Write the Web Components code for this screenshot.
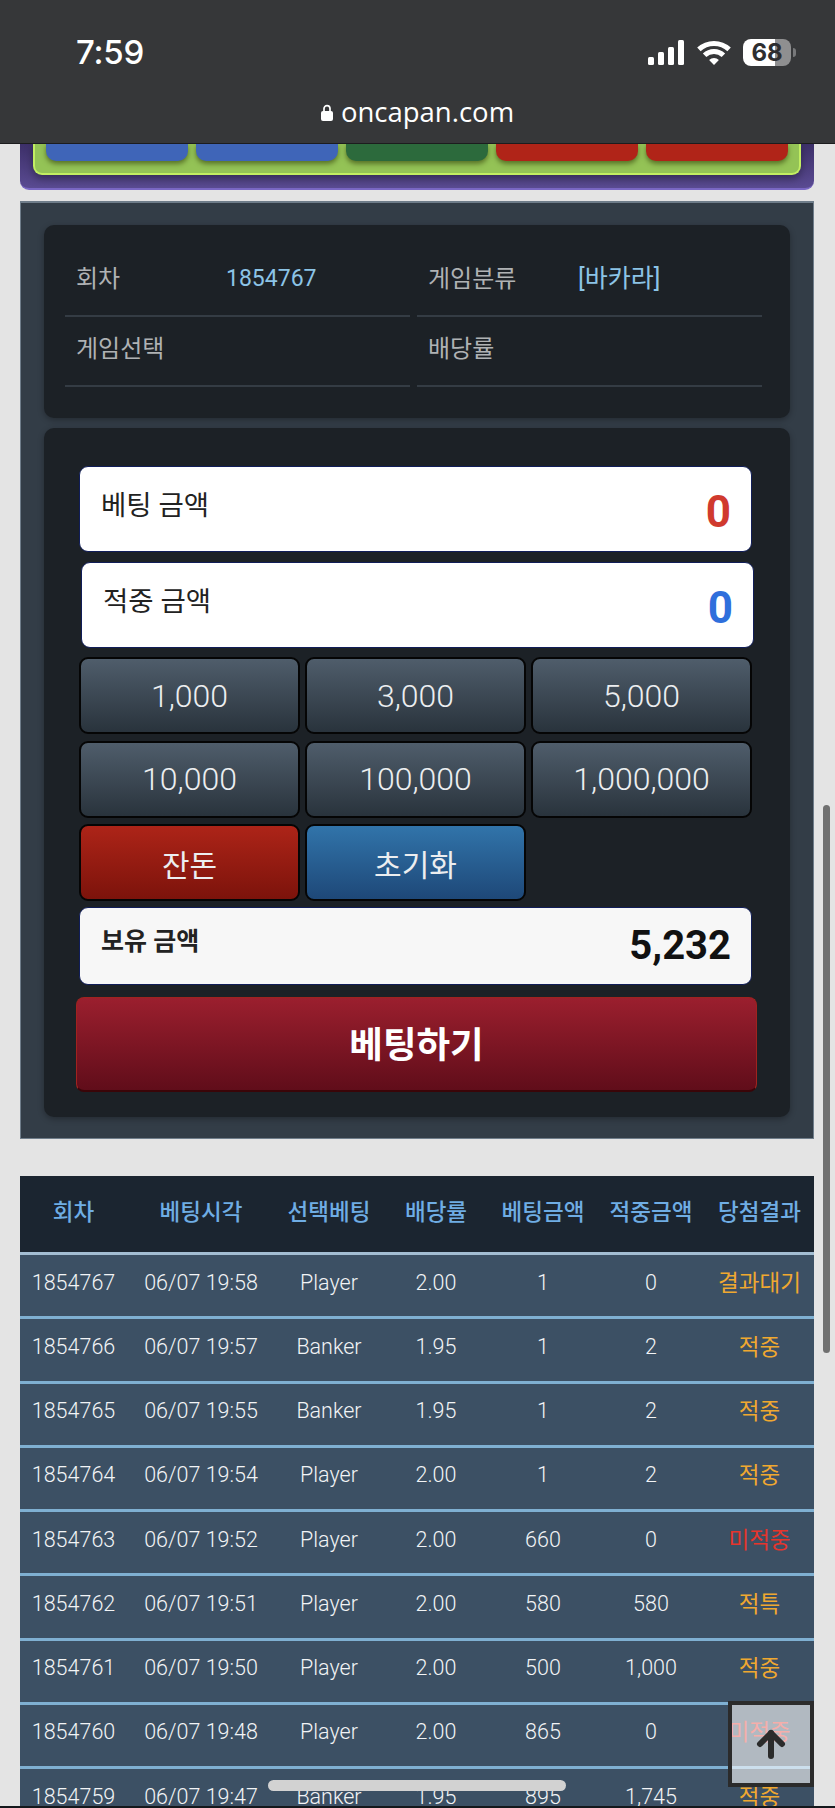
<!doctype html>
<html lang="ko">
<head>
<meta charset="utf-8">
<title>oncapan.com</title>
<style>
  html, body { margin: 0; height: 1808px; overflow: hidden; background: #e4e4e4; }
  body { font-family: Roboto, "Noto Sans CJK KR", sans-serif; font-weight: 300; }
</style>
</head>
<body>

<browser-bar time="7:59" url="oncapan.com" battery="68"></browser-bar>
<game-board></game-board>

<bet-panel>
  <info-card>
    <info-cell label="회차" value="1854767"></info-cell>
    <info-cell label="게임분류" value="[바카라]" wide></info-cell>
    <info-cell label="게임선택"></info-cell>
    <info-cell label="배당률"></info-cell>
  </info-card>
  <bet-card>
    <amount-box label="베팅 금액" value="0" tone="red"></amount-box>
    <amount-box label="적중 금액" value="0" tone="blue" shifted></amount-box>
    <chip-grid>
      <chip-button>1,000</chip-button>
      <chip-button>3,000</chip-button>
      <chip-button>5,000</chip-button>
      <chip-button>10,000</chip-button>
      <chip-button>100,000</chip-button>
      <chip-button>1,000,000</chip-button>
      <chip-button kind="red">잔돈</chip-button>
      <chip-button kind="blue">초기화</chip-button>
    </chip-grid>
    <amount-box label="보유 금액" value="5,232" tone="black" balance></amount-box>
    <submit-button>베팅하기</submit-button>
  </bet-card>
</bet-panel>

<bet-history></bet-history>

<page-overlays></page-overlays>

<script>
'use strict'

// helper, every element here is the same shape: a template string in a shadow root
const define = (name, render) => {
  customElements.define(name, class extends HTMLElement {
    constructor() {
      super()
      this.attachShadow({mode: 'open'})
    }
    connectedCallback() {
      this.shadowRoot.innerHTML = render(this)
    }
  })
}
const attr = (el, name, fallback = '') => el.getAttribute(name) ?? fallback


// browser chrome on top
define('browser-bar', el => `
  <style>
    :host { display: block; height: 143px; background: #363739; border-bottom: 1px solid #1c1c1e; box-sizing: content-box;
            color: #fff; font-family: Inter, sans-serif; margin-bottom: -1px; position: relative; z-index: 2; }
    .status { display: flex; align-items: center; height: 27px; padding: 39px 39px 0 76px; }
    .time { font-size: 33px; font-weight: 500; line-height: 27px; flex: 1; letter-spacing: -.2px; }
    .icons { display: flex; align-items: center; }
    .wifi { margin: 0 11px 0 12px; }
    .battery { position: relative; width: 48px; height: 27px; border-radius: 8px; overflow: hidden;
               background: linear-gradient(90deg, #fff 0 32px, #8f8f90 32px); color: #2e2e30;
               font-size: 24px; font-weight: 700; line-height: 27px; text-align: center; }
    .tip { width: 3px; height: 9px; background: #77787a; border-radius: 0 3px 3px 0; margin-left: 2px; }
    .url { display: flex; align-items: center; justify-content: center; gap: 8px; margin-top: 29px; height: 34px;
           font-family: "Open Sans", sans-serif; font-size: 27.5px; font-weight: 400; line-height: 34px; }
  </style>
  <div class="status">
    <div class="time">${attr(el, 'time')}</div>
    <div class="icons">
      <svg width="36" height="25" viewBox="0 0 36 25" fill="#fff">
        <rect x="0" y="17" width="6" height="8" rx="1.5"/>
        <rect x="10" y="12" width="6" height="13" rx="1.5"/>
        <rect x="20" y="7" width="6" height="18" rx="1.5"/>
        <rect x="30" y="0" width="6" height="25" rx="1.5"/>
      </svg>
      <svg class="wifi" width="36" height="25" viewBox="0 0 36 25" fill="none" stroke="#fff" stroke-width="5">
        <path d="M2.9 9.4A22 22 0 0 1 33.1 9.4"/>
        <path d="M8.6 15.2A13.5 13.5 0 0 1 27.4 15.2"/>
        <path d="M18 25L13.1 20.1A7 7 0 0 1 22.9 20.1Z" fill="#fff" stroke="none"/>
      </svg>
      <div class="battery">${attr(el, 'battery')}</div>
      <div class="tip"></div>
    </div>
  </div>
  <div class="url">
    <svg width="12" height="17" viewBox="0 0 12 17">
      <path d="M3 8V4.6a3 3 0 0 1 6 0V8" fill="none" stroke="#fff" stroke-width="1.7"/>
      <rect x="0" y="7" width="12" height="10" rx="2" fill="#fff"/>
    </svg>
    <span>${attr(el, 'url')}</span>
  </div>
`)


// bottom of the game board, the rest is scrolled away under the bar
define('game-board', () => `
  <style>
    :host { display: block; margin: 0 21px 0 20px; height: 47px; box-sizing: border-box;
            background: linear-gradient(#3c2f68, #5a4b92); border-radius: 0 0 9px 9px;
            border-bottom: 2px solid #7a68c4; }
    .field { margin: 0 13px; height: 32px; box-sizing: border-box; padding: 0 11px; display: flex; gap: 8px;
             background: #94c356; border: 2px solid #c2ee62; border-top: 0; border-radius: 0 0 9px 9px;
             box-shadow: 0 4px 8px rgba(0,0,0,.35); }
    .field i { flex: 1; height: 18px; border-radius: 0 0 10px 10px; box-shadow: 0 3px 5px rgba(40,50,0,.55); }
    .b { background: #3f65b8; } .g { background: #2c6a3c; } .r { background: #b02418; }
  </style>
  <div class="field"><i class="b"></i><i class="b"></i><i class="g"></i><i class="r"></i><i class="r"></i></div>
`)


define('bet-panel', () => `
  <style>
    :host { display: block; margin: 11px 21px 0 20px; padding: 22px 23px 21px; box-sizing: border-box; height: 938px;
            background: #333d47; border: 1px solid #6f7d8a; border-top-width: 2px; }
    .stack { display: flex; flex-direction: column; gap: 10px; }
  </style>
  <div class="stack"><slot></slot></div>
`)

define('info-card', () => `
  <style>
    :host { display: block; height: 193px; box-sizing: border-box; padding: 22px 29px 0 21px; background: #1c2126;
            border-radius: 10px; box-shadow: 0 2px 6px rgba(0,0,0,.3); }
    .grid { display: grid; grid-template-columns: 345px 345px; column-gap: 7px; }
  </style>
  <div class="grid"><slot></slot></div>
`)

define('info-cell', el => `
  <style>
    :host { display: flex; height: 70px; box-sizing: border-box; padding: 10px 0 0 11px; line-height: 44px;
            border-bottom: 2px solid #343c44; }
    .k { width: 150px; color: #afb2b4; font-size: 24px; font-weight: 400; }
    .v { color: #8cc4e6; font-size: 23px; font-weight: 400; }
    :host([wide]) .v { font-size: 25px; }
  </style>
  <div class="k">${attr(el, 'label')}</div><div class="v">${attr(el, 'value')}</div>
`)

define('bet-card', () => `
  <style>
    :host { display: block; height: 689px; box-sizing: border-box; padding: 38px 38px 0 35px; background: #1c2126;
            border-radius: 10px; box-shadow: 0 2px 6px rgba(0,0,0,.3); }
  </style>
  <slot></slot>
`)

const tones = { red: '#d03a2e', blue: '#2f6fdc', black: '#111' }

define('amount-box', el => {
  const balance = el.hasAttribute('balance')
  return `
  <style>
    :host { display: flex; justify-content: space-between; box-sizing: border-box; color: #222;
            height: ${balance ? 78 : 86}px; margin-bottom: ${balance ? 12 : 10}px;
            background: ${balance ? '#f7f7f7' : '#fff'}; border: 1px solid #101d58; border-radius: 9px;
            padding: 0 20px 0 21px; }
    :host([shifted]) { transform: translateX(2px); margin-bottom: 9px; }
    .k { font-size: ${balance ? 25 : 27.5}px; font-weight: ${balance ? 700 : 400}; line-height: ${balance ? 68 : 78}px; }
    .v { font-size: ${balance ? 40 : 44}px; font-weight: 700; line-height: ${balance ? 76 : 90}px;
         color: ${tones[attr(el, 'tone', 'black')]}; font-family: Roboto, sans-serif; }
  </style>
  <div class="k">${attr(el, 'label')}</div><div class="v">${attr(el, 'value')}</div>
`})

define('chip-grid', () => `
  <style>
    :host { display: block; margin: 0 0 6px; }
    .grid { display: grid; grid-template-columns: repeat(3, 221px); grid-auto-rows: 77px; column-gap: 5px; row-gap: 6.5px; }
  </style>
  <div class="grid"><slot></slot></div>
`)

const chipColors = {
  grey: ['#4f5d6b', '#29333c'],
  red: ['#ad2418', '#7c130b'],
  blue: ['#3174aa', '#1e4878']
}

define('chip-button', el => {
  const kind = attr(el, 'kind', 'grey')
  const [from, to] = chipColors[kind]
  return `
  <style>
    :host { display: flex; align-items: center; justify-content: center; box-sizing: border-box;
            background: linear-gradient(${from}, ${to}); border: 2px solid #050505; border-radius: 9px;
            color: #eceef0; font-size: ${kind === 'grey' ? 32 : 30}px; font-weight: ${kind === 'grey' ? 300 : 400}; }
  </style>
  <slot></slot>
`})

define('submit-button', () => `
  <style>
    :host { display: flex; align-items: center; justify-content: center; box-sizing: border-box; height: 95px;
            margin: 0 -5px 0 -3px; background: linear-gradient(#9b1f2e, #600d1a); border: 1px solid #a0231f; border-bottom: 2px solid #3a0508;
            border-radius: 8px; color: #fff; font-size: 36.5px; font-weight: 700; padding-bottom: 3px; }
  </style>
  <slot></slot>
`)


// history table
const COLS = '107px 148px 108px 106px 108px 108px 109px'
const HEAD = ['회차', '베팅시각', '선택베팅', '배당률', '베팅금액', '적중금액', '당첨결과']
const ROWS = [
  ['1854767', '06/07 19:58', 'Player', '2.00', '1', '0', '결과대기'],
  ['1854766', '06/07 19:57', 'Banker', '1.95', '1', '2', '적중'],
  ['1854765', '06/07 19:55', 'Banker', '1.95', '1', '2', '적중'],
  ['1854764', '06/07 19:54', 'Player', '2.00', '1', '2', '적중'],
  ['1854763', '06/07 19:52', 'Player', '2.00', '660', '0', '미적중'],
  ['1854762', '06/07 19:51', 'Player', '2.00', '580', '580', '적특'],
  ['1854761', '06/07 19:50', 'Player', '2.00', '500', '1,000', '적중'],
  ['1854760', '06/07 19:48', 'Player', '2.00', '865', '0', '미적중'],
  ['1854759', '06/07 19:47', 'Banker', '1.95', '895', '1,745', '적중']
]

define('bet-history', () => `
  <style>
    :host { display: block; margin: 37px 21px 0 20px; background: #3c5064; color: #f2f4f6; font-size: 21.5px; }
    .row { display: grid; grid-template-columns: ${COLS}; align-items: center; text-align: center; box-sizing: border-box;
           height: 64.25px; border-bottom: 3px solid #7fb0d2; padding-bottom: 7px; }
    .head { height: 79px; background: #1b2530; border-bottom-color: #a3bdd2; color: #6fade4; font-size: 22.5px; font-weight: 500; padding-bottom: 8px; }
    .win { color: #f0a830; font-size: 22.5px; font-weight: 400; margin-bottom: 3px; }
    .lose { color: #e6352c; font-size: 22.5px; font-weight: 400; margin-bottom: 3px; }
  </style>
  <div class="row head">${HEAD.map(h => `<span>${h}</span>`).join('')}</div>
  ${ROWS.map(r => `<div class="row">${r.map((c, i) => {
    const cls = i < 6 ? '' : c === '미적중' ? 'lose' : 'win'
    return `<span class="${cls}">${c}</span>`
  }).join('')}</div>`).join('')}
`)


// things floating over the page
define('page-overlays', () => `
  <style>
    :host { display: block; }
    .top { position: fixed; left: 728px; top: 1701px; width: 86px; height: 86px; box-sizing: border-box;
           border: 4px solid #2b2b2b; background: rgba(255,255,255,.6); display: flex; align-items: center; justify-content: center; }
    .home { position: fixed; left: 268px; top: 1780px; width: 298px; height: 11px; border-radius: 6px; background: #d2d2d2; }
    .scroll { position: fixed; left: 822.5px; top: 805px; width: 7px; height: 548px; border-radius: 4px; background: #707070; }
    .edge { position: fixed; left: 0; right: 0; bottom: 0; height: 2px; background: #14181c; }
  </style>
  <div class="top">
    <svg width="30" height="30" viewBox="0 0 30 30" fill="none" stroke="#2b2b2b" stroke-width="6" stroke-linecap="round" stroke-linejoin="round">
      <path d="M15 27V4"/><path d="M4 15L15 4L26 15"/>
    </svg>
  </div>
  <div class="scroll"></div>
  <div class="home"></div>
  <div class="edge"></div>
`)
</script>
</body>
</html>
